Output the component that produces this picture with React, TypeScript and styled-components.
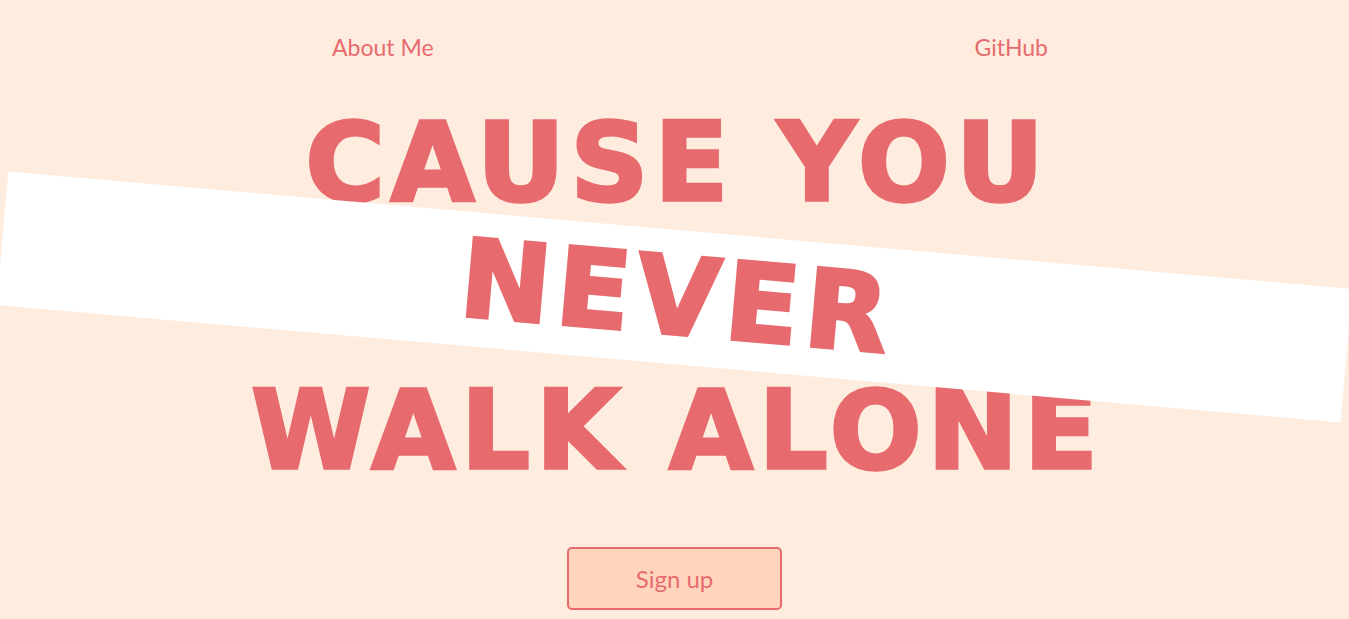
import React from "react";
import styled, { createGlobalStyle } from "styled-components";

const coral = "#e76b6e";

const GlobalStyle = createGlobalStyle`
  html, body {
    margin: 0;
    padding: 0;
    background: #feeddf;
    overflow: hidden;
  }
  body {
    font-family: "Lato", "Open Sans", sans-serif;
  }
`;

const Page = styled.main`
  display: flex;
  flex-direction: column;
  align-items: center;
  width: 100%;
  min-height: 100vh;
  background: #feeddf;
`;

const Nav = styled.nav`
  box-sizing: border-box;
  width: 100%;
  height: 96px;
  display: flex;
  justify-content: space-between;
  align-items: flex-start;
  padding: 30px 301px 0 332px;
`;

const NavLink = styled.a`
  font-family: "Lato", "Open Sans", sans-serif;
  font-weight: 400;
  font-size: 23px;
  line-height: 34px;
  color: ${coral};
  text-decoration: none;
  cursor: pointer;
`;

const Headline = styled.h1`
  width: 100%;
  margin: 0;
  font-family: "DejaVu Sans", "Liberation Sans", sans-serif;
  font-weight: 700;
  font-size: 108px;
  line-height: 134px;
  letter-spacing: 6px;
  text-align: center;
  color: ${coral};
  -webkit-text-stroke: 3.5px ${coral};
  text-transform: uppercase;
`;

const Line = styled.span`
  display: block;
  height: 134px;
  white-space: nowrap;
  padding-left: 6px;
`;

const TiltedLine = styled(Line)`
  background: #ffffff;
  transform: rotate(5deg);
`;

const SignUp = styled.button`
  box-sizing: border-box;
  margin-top: 49px;
  width: 215px;
  height: 63px;
  background: #ffd6bd;
  border: 2px solid ${coral};
  border-radius: 5px;
  color: ${coral};
  font-family: "Lato", "Open Sans", sans-serif;
  font-weight: 400;
  font-size: 24px;
  cursor: pointer;
`;

export default function App() {
  return (
    <>
      <GlobalStyle />
      <Page>
        <Nav>
          <NavLink>About Me</NavLink>
          <NavLink>GitHub</NavLink>
        </Nav>
        <Headline>
          <Line>Cause you</Line>
          <TiltedLine>Never</TiltedLine>
          <Line>Walk alone</Line>
        </Headline>
        <SignUp>Sign up</SignUp>
      </Page>
    </>
  );
}
